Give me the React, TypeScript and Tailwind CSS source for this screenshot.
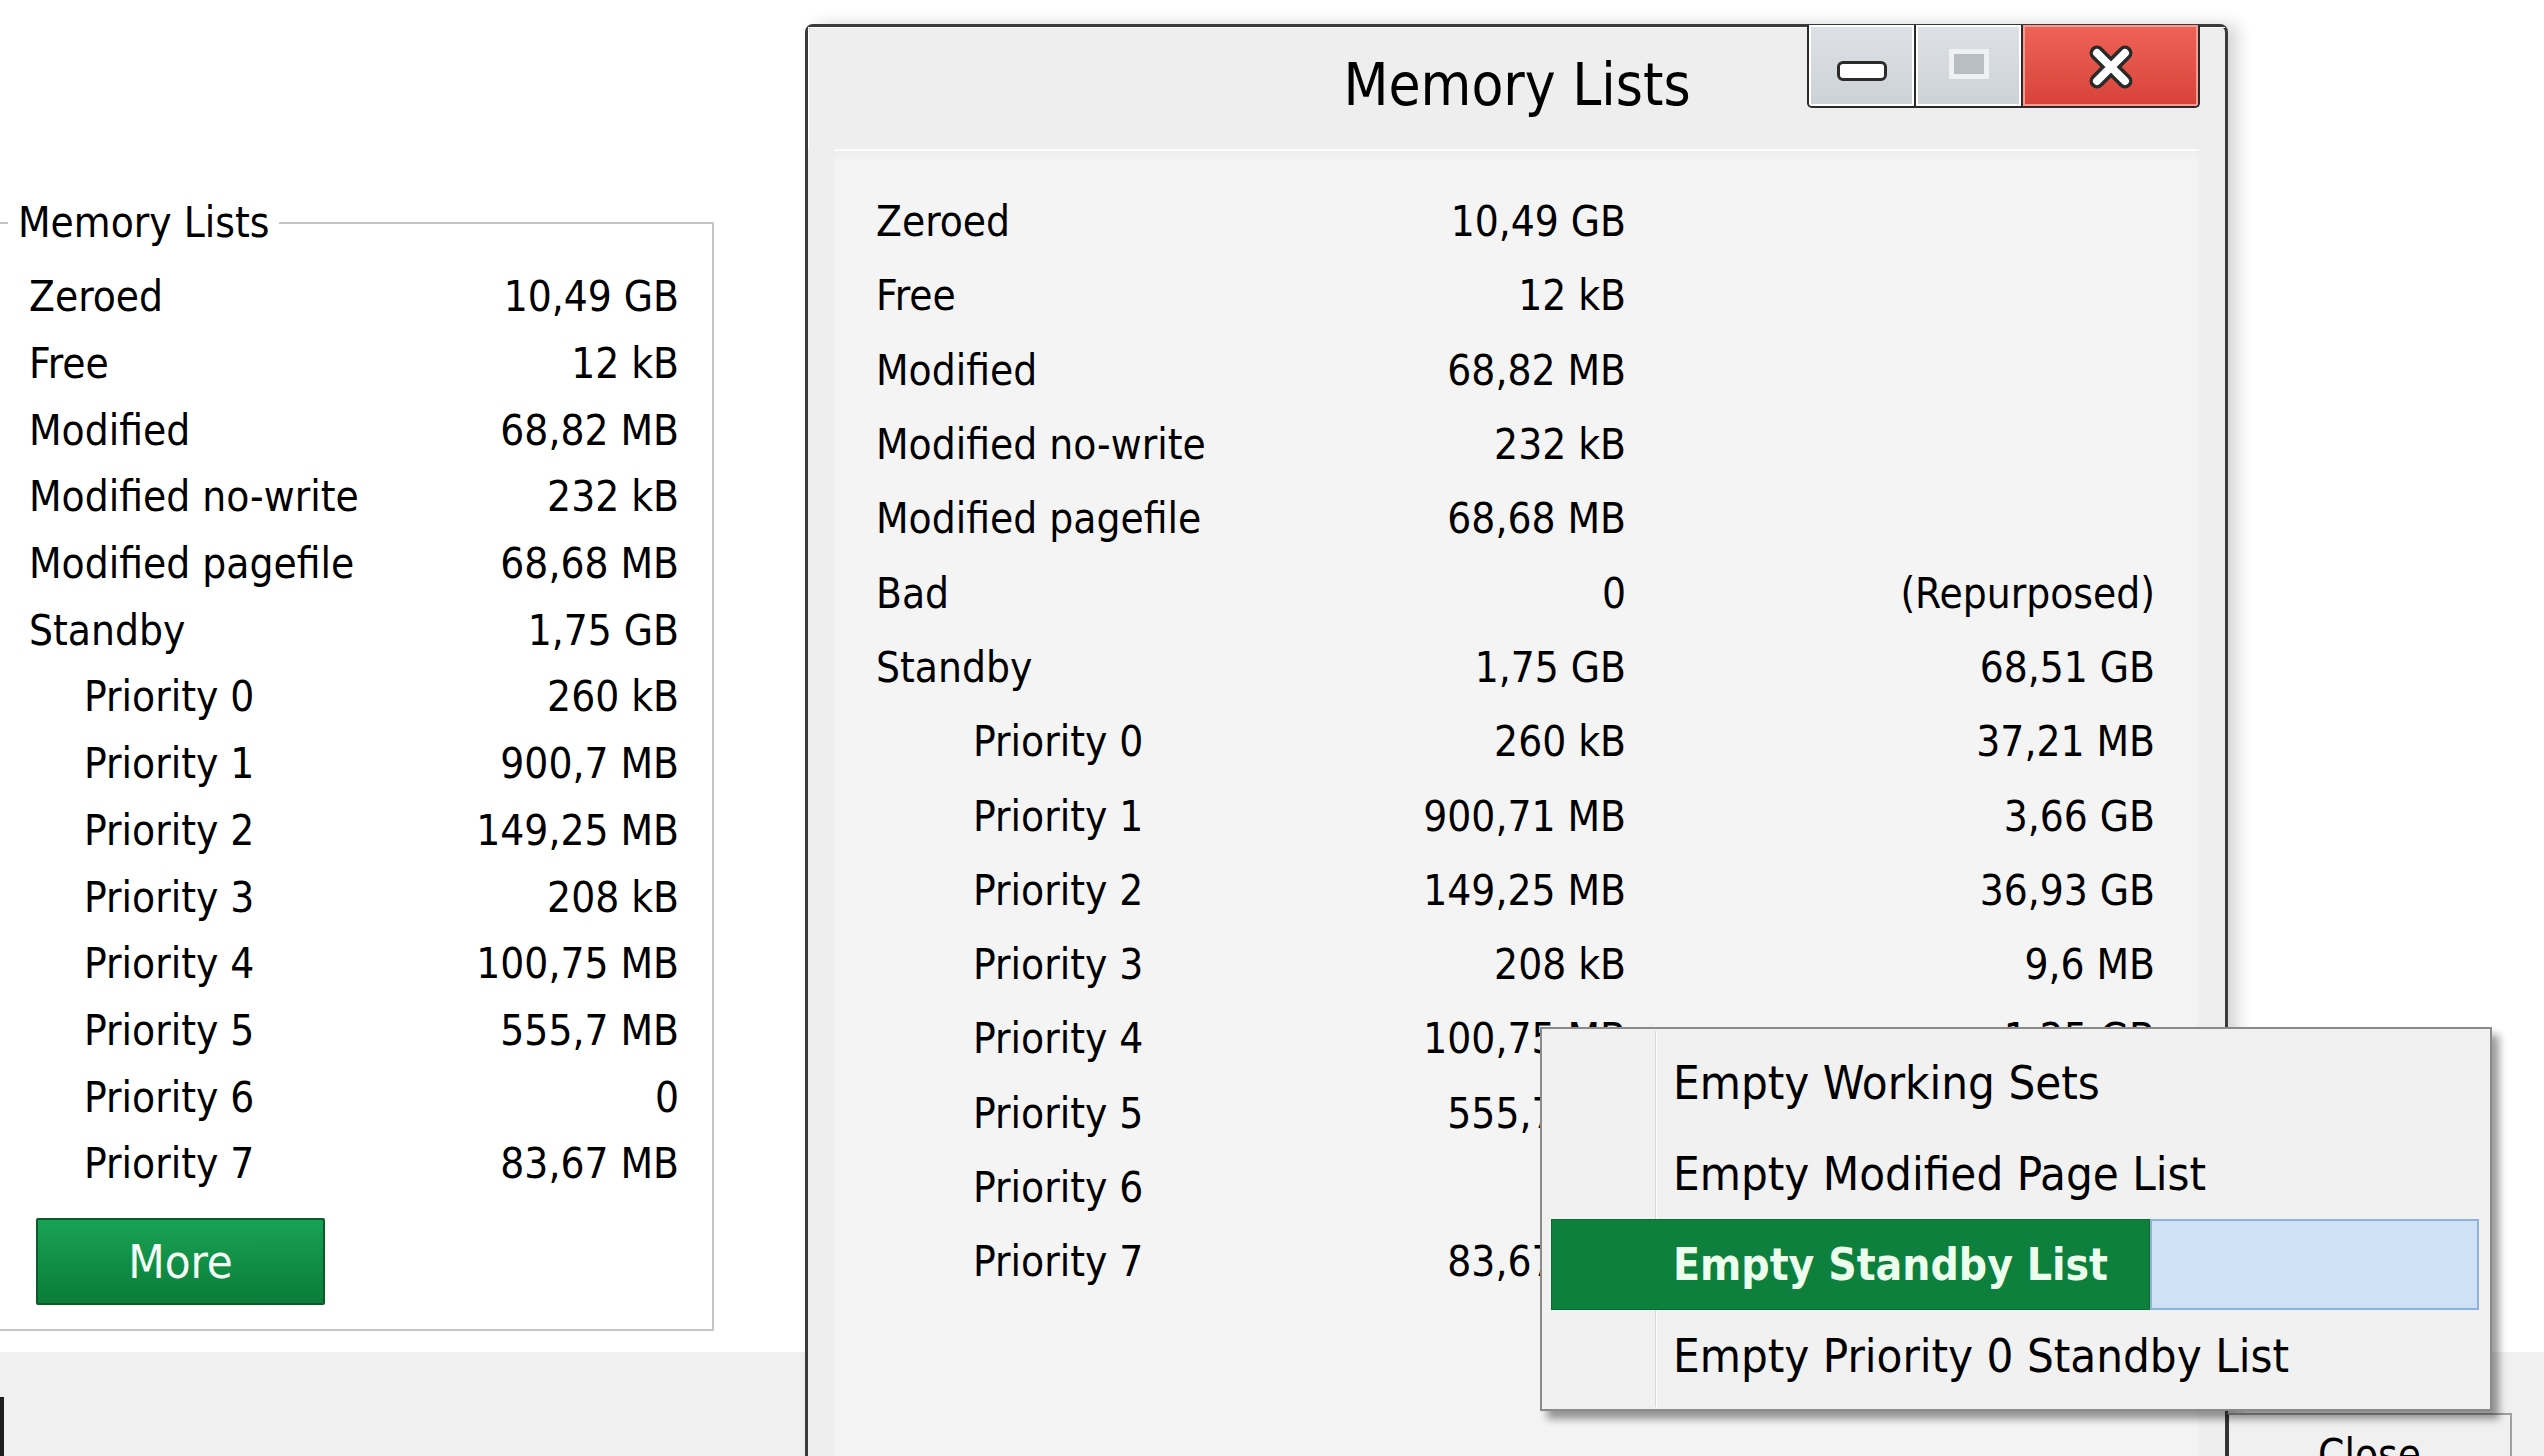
import React from "react";

const leftRows: [string, string, boolean][] = [
  ["Zeroed", "10,49 GB", false],
  ["Free", "12 kB", false],
  ["Modified", "68,82 MB", false],
  ["Modified no-write", "232 kB", false],
  ["Modified pagefile", "68,68 MB", false],
  ["Standby", "1,75 GB", false],
  ["Priority 0", "260 kB", true],
  ["Priority 1", "900,7 MB", true],
  ["Priority 2", "149,25 MB", true],
  ["Priority 3", "208 kB", true],
  ["Priority 4", "100,75 MB", true],
  ["Priority 5", "555,7 MB", true],
  ["Priority 6", "0", true],
  ["Priority 7", "83,67 MB", true],
];

const dialogRows: [string, string, string, boolean][] = [
  ["Zeroed", "10,49 GB", "", false],
  ["Free", "12 kB", "", false],
  ["Modified", "68,82 MB", "", false],
  ["Modified no-write", "232 kB", "", false],
  ["Modified pagefile", "68,68 MB", "", false],
  ["Bad", "0", "(Repurposed)", false],
  ["Standby", "1,75 GB", "68,51 GB", false],
  ["Priority 0", "260 kB", "37,21 MB", true],
  ["Priority 1", "900,71 MB", "3,66 GB", true],
  ["Priority 2", "149,25 MB", "36,93 GB", true],
  ["Priority 3", "208 kB", "9,6 MB", true],
  ["Priority 4", "100,75 MB", "1,25 GB", true],
  ["Priority 5", "555,7 MB", "", true],
  ["Priority 6", "0", "", true],
  ["Priority 7", "83,67 MB", "", true],
];

const menuItems = [
  "Empty Working Sets",
  "Empty Modified Page List",
  "Empty Standby List",
  "Empty Priority 0 Standby List",
];

function LeftPanel() {
  return (
    <div className="flex h-full flex-col">
      <div className="pt-[222px]">
        {/* group box, left edge runs off screen */}
        <div className="relative ml-[-4px] w-[718px] border-t-2 border-r-2 border-b-2 border-[#c4c4c4] pl-[33px] pr-[33px] pt-[40px] pb-[24px]">
          <span className="absolute left-[12px] top-[-1px] -translate-y-1/2 bg-white px-[10px] text-[42px] leading-none">
            Memory Lists
          </span>
          {leftRows.map(([label, value, indent]) => (
            <div
              key={label}
              className="flex h-[66.7px] items-center justify-between text-[42px] leading-none"
            >
              <span className={indent ? "pl-[55px]" : ""}>{label}</span>
              <span>{value}</span>
            </div>
          ))}
          <button className="mt-[20px] ml-[7px] flex h-[87px] w-[289px] items-center justify-center rounded-[2px] border-2 border-[#0a5a2a] bg-linear-to-b from-[#18a255] to-[#0a7d39] text-[47px] leading-none text-[#f4fff6]">
            More
          </button>
        </div>
      </div>
      <div className="mt-[21px] flex flex-1 flex-col bg-[#f0f0f0]">
        <div className="mt-[45px] w-[4px] flex-1 bg-[#1e1e1e]" />
      </div>
    </div>
  );
}

function TitleButtons() {
  return (
    <div className="absolute top-[-3px] right-[25px] flex h-[83px] overflow-hidden rounded-b-[5px] border-2 border-t-0 border-[#2a2a2a]">
      <div className="flex w-[105px] items-center justify-center border-2 border-white bg-linear-to-b from-[#dde1e5] to-[#cdd2d7]">
        <div className="mt-[10px] h-[20px] w-[50px] rounded-[6px] border-[3px] border-[#2b2b2b] bg-white" />
      </div>
      <div className="w-[2px] bg-[#2a2a2a]" />
      <div className="flex w-[105px] items-center justify-center border-2 border-white bg-linear-to-b from-[#dde1e5] to-[#cdd2d7]">
        <div className="mb-[4px] h-[30px] w-[40px] border-[5px] border-[#eef0f2] bg-[#b9bec3]" />
      </div>
      <div className="w-[2px] bg-[#2a2a2a]" />
      <div className="flex w-[175px] items-center justify-center border-2 border-[#f59b92] bg-linear-to-b from-[#ee6256] to-[#d8433a]">
        <svg width="50" height="50" viewBox="0 0 50 50" className="mt-[2px]">
          <path
            d="M11 11 L39 39 M39 11 L11 39"
            stroke="#2a2a2a"
            strokeWidth="15"
            strokeLinecap="round"
          />
          <path
            d="M11 11 L39 39 M39 11 L11 39"
            stroke="#ffffff"
            strokeWidth="8"
            strokeLinecap="round"
          />
        </svg>
      </div>
    </div>
  );
}

function DialogWindow() {
  return (
    <div className="absolute left-[805px] top-[24px] flex h-[1500px] w-[1423px] flex-col rounded-t-[8px] border-[3px] border-[#3a3a3a] bg-[#eeeeee] shadow-[10px_0_16px_rgba(0,0,0,0.16)]">
      <div className="relative flex h-[122px] justify-center border-t border-l border-white pt-[28px]">
        <span className="text-[58px] leading-none text-black">Memory Lists</span>
        <TitleButtons />
      </div>
      <div className="mx-[26px] flex-1 border-t-2 border-[#fbfbfb] bg-[#f4f4f4] pt-[34px] pl-[42px] pr-[43px] shadow-[inset_0_6px_8px_rgba(0,0,0,0.025)]">
        <div className="grid grid-cols-[420px_330px_529px]">
          {dialogRows.map(([label, v1, v2, indent]) => (
            <React.Fragment key={label}>
              <div
                className={
                  "flex h-[74.3px] items-center text-[42px] leading-none" +
                  (indent ? " pl-[97px]" : "")
                }
              >
                {label}
              </div>
              <div className="flex h-[74.3px] items-center justify-end text-[42px] leading-none">
                {v1}
              </div>
              <div className="flex h-[74.3px] items-center justify-end text-[42px] leading-none">
                {v2}
              </div>
            </React.Fragment>
          ))}
        </div>
      </div>
    </div>
  );
}

function CloseButton() {
  return (
    <div className="absolute left-[2226px] top-[1413px] h-[100px] w-[286px] border-t-2 border-r-2 border-l-[3px] border-t-[#a0a0a0] border-r-[#a0a0a0] border-l-[#333333] bg-[#f0f0f0] pt-[19px] text-center text-[42px] leading-none">
      Close
    </div>
  );
}

function ContextMenu() {
  return (
    <div className="absolute left-[1540px] top-[1027px] h-[384px] w-[952px] border-2 border-[#8a8a8a] bg-[#f1f1f1] py-[8px] shadow-[7px_8px_8px_rgba(0,0,0,0.4)]">
      <div className="absolute left-[113px] top-[2px] bottom-[2px] w-[2px] border-l border-r border-l-[#d8d8d8] border-r-white" />
      {menuItems.map((item) =>
        item === "Empty Standby List" ? (
          <div key={item} className="relative ml-[9px] mr-[11px] flex h-[91px]">
            <div className="flex w-[599px] items-center whitespace-nowrap border border-[#0a6a30] bg-[#0c803c] pl-[121px] text-[44px] font-bold leading-none text-[#ecffec]">
              {item}
            </div>
            <div className="flex-1 border-2 border-[#8fb2dc] bg-[#cfe1f5]" />
          </div>
        ) : (
          <div
            key={item}
            className="relative flex h-[91px] items-center whitespace-nowrap pl-[131px] text-[47px] leading-none"
          >
            {item}
          </div>
        )
      )}
    </div>
  );
}

export default function App() {
  return (
    <div className="relative h-[1456px] w-[2544px] overflow-hidden bg-white font-['DejaVu_Sans_Condensed','DejaVu_Sans','Liberation_Sans',sans-serif] text-black">
      <LeftPanel />
      <DialogWindow />
      <CloseButton />
      <ContextMenu />
    </div>
  );
}
